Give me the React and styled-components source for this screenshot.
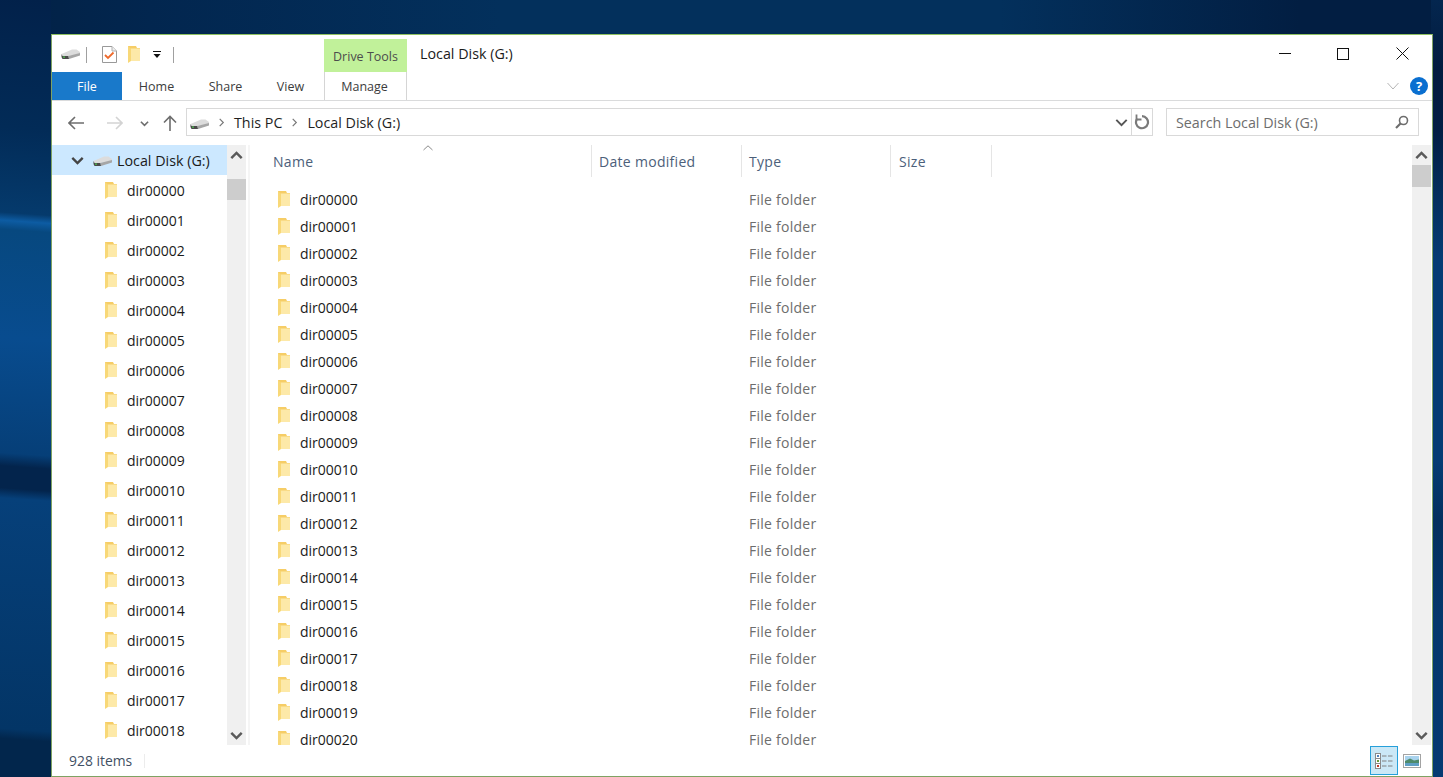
import React from "react";
import styled, { createGlobalStyle } from "styled-components";

const GlobalStyle = createGlobalStyle`
  html, body {
    margin: 0;
    height: 100%;
    overflow: hidden;
  }
  body {
    font-family: "Open Sans", "Noto Sans", "Liberation Sans", sans-serif;
    background-color: #02214a;
    background-image:
      linear-gradient(180deg, #04264f 0, #021c3f 70px, #021f44 130px, #04305f 200px, #053c74 260px, #053c74 460px, #03305f 520px, #05386d 620px, #053a72 777px),
      linear-gradient(184deg, #02214a 0, #022b57 130px, #053a6c 215px, #0d5ca3 223px, #07487f 232px, #084c8f 340px, #063f78 455px, #03244c 468px, #03244c 490px, #06407a 500px, #033566 730px, #02264c 740px, #02264c 777px),
      linear-gradient(90deg, #022145 0, #02264f 150px, #03305c 500px, #03305c 1000px, #021e42 1300px, #021e42 1443px);
    background-size: 12px 100%, 51px 100%, 100% 34px;
    background-position: right top, left top, left top;
    background-repeat: no-repeat;
  }
`;

const Desktop = styled.div`
  width: 1443px;
  height: 777px;
  padding: 34px 10px 0 51px;
  box-sizing: border-box;
`;

const Window = styled.div`
  height: 743px;
  box-sizing: border-box;
  background: #fff;
  border: 1px solid #7ea263;
  border-top-color: #8fc060;
  display: flex;
  flex-direction: column;
  color: #1a1a1a;
  font-size: 14px;
  overflow: hidden;
`;

const TitleBar = styled.div`
  height: 37px;
  flex: none;
  display: flex;
`;

const QuickAccess = styled.div`
  width: 272px;
  flex: none;
  display: flex;
  align-items: center;
  padding: 2px 0 0 9px;
  box-sizing: border-box;
`;

const QuickItem = styled.span`
  display: flex;
  margin-left: ${p => p.$gap || 0}px;
`;

const QuickDivider = styled.span`
  width: 1px;
  height: 16px;
  background: #a0a0a0;
  margin-left: ${p => p.$gap}px;
`;

const ContextTab = styled.div`
  width: 83px;
  height: 33px;
  margin-top: 4px;
  background: #c1f19a;
  color: #4d4d4d;
  font-size: 12.5px;
  display: flex;
  align-items: center;
  justify-content: center;
  padding-top: 2px;
  box-sizing: border-box;
`;

const Title = styled.div`
  flex: 1;
  font-size: 14.3px;
  padding: 9px 0 0 13px;
  color: #1a1a1a;
`;

const WindowButton = styled.button`
  width: ${p => p.$width}px;
  height: 37px;
  padding: 0;
  border: 0;
  background: none;
  display: flex;
  align-items: center;
  justify-content: center;
`;

const Ribbon = styled.div`
  height: 28px;
  flex: none;
  display: flex;
  border-bottom: 1px solid #dadbdc;
`;

const Tab = styled.div`
  width: ${p => p.$width}px;
  height: 28px;
  display: flex;
  align-items: center;
  justify-content: center;
  font-size: 12.5px;
  color: #3c3c3c;
`;

const FileTab = styled(Tab)`
  background: #1979ca;
  color: #fff;
`;

const ManageTab = styled(Tab)`
  border-left: 1px solid #d5d5d5;
  border-right: 1px solid #d5d5d5;
  box-sizing: border-box;
  margin-left: 3px;
  padding-right: 2px;
`;

const RibbonEnd = styled.div`
  margin-left: auto;
  display: flex;
  align-items: center;
  gap: 11px;
  padding: 0 4px 1px 0;
`;

const HelpBadge = styled.span`
  width: 18px;
  height: 18px;
  border-radius: 50%;
  background: #0a6fd0;
  color: #fff;
  font-size: 13px;
  font-weight: 700;
  line-height: 18px;
  text-align: center;
`;

const AddressRow = styled.div`
  height: 44px;
  flex: none;
  display: flex;
  align-items: flex-start;
  padding: 7px 12px 0 12px;
  box-sizing: border-box;
`;

const NavButtons = styled.div`
  width: 122px;
  height: 28px;
  flex: none;
  display: flex;
  align-items: center;
  padding-top: 2px;
  box-sizing: border-box;
`;

const NavButton = styled.span`
  display: flex;
  margin-left: ${p => p.$gap || 0}px;
`;

const AddressBox = styled.div`
  width: 967px;
  height: 28px;
  flex: none;
  box-sizing: border-box;
  border: 1px solid #d9d9d9;
  display: flex;
  align-items: center;
  font-size: 14.3px;
`;

const Crumb = styled.span`
  margin-left: ${p => p.$gap}px;
  margin-top: ${p => p.$drop || 0}px;
  display: flex;
  color: #1f1f1f;
`;

const AddressEnd = styled.div`
  margin-left: auto;
  height: 100%;
  display: flex;
  align-items: center;
`;

const RefreshCell = styled.span`
  width: 20px;
  height: 100%;
  margin-left: 3px;
  border-left: 1px solid #d9d9d9;
  display: flex;
  align-items: center;
  justify-content: center;
`;

const SearchBox = styled.div`
  width: 253px;
  height: 28px;
  flex: none;
  margin-left: 13px;
  box-sizing: border-box;
  border: 1px solid #d9d9d9;
  display: flex;
  align-items: center;
  justify-content: space-between;
  padding: 0 9px;
  color: #6d6d6d;
  font-size: 14.3px;
`;

const Body = styled.div`
  flex: 1;
  min-height: 0;
  display: flex;
  padding-right: 1px;
`;

const TreePane = styled.div`
  width: 175px;
  flex: none;
  overflow: hidden;
`;

const TreeRoot = styled.div`
  height: 30px;
  background: #cce8ff;
  display: flex;
  align-items: center;
  padding-left: 19px;
  font-size: 14.3px;
`;

const RootDrive = styled.span`
  display: flex;
  margin: 3px 5px 0 9px;
`;

const TreeRow = styled.div`
  height: 30px;
  display: flex;
  align-items: center;
  padding-left: 53px;
  font-size: 14px;
`;

const TreeLabel = styled.span`
  margin-left: 10px;
`;

const Scrollbar = styled.div`
  width: ${p => p.$width}px;
  flex: none;
  background: #f0f0f0;
  display: flex;
  flex-direction: column;
  align-items: center;
  position: relative;
`;

const ScrollArrow = styled.span`
  height: 20px;
  flex: none;
  display: flex;
  align-items: center;
  justify-content: center;
  margin-bottom: ${p => (p.$top ? "auto" : 0)};
`;

const Thumb = styled.span`
  position: absolute;
  left: 0;
  right: 0;
  top: ${p => p.$top}px;
  height: ${p => p.$height}px;
  background: #cdcdcd;
`;

const PaneGap = styled.div`
  width: 2px;
  margin-left: 2px;
  flex: none;
  background: #f5f5f5;
`;

const ListPane = styled.div`
  flex: 1;
  min-width: 0;
  overflow: hidden;
  position: relative;
`;

const HeaderRow = styled.div`
  height: 32px;
  display: flex;
  position: relative;
  padding-left: 17px;
  margin-bottom: 9px;
  color: #4c607a;
  font-size: 14px;
  letter-spacing: 0.3px;
`;

const HeaderCell = styled.div`
  width: ${p => p.$width}px;
  flex: none;
  box-sizing: border-box;
  padding-left: ${p => p.$pad}px;
  border-right: 1px solid #e5e5e5;
  display: flex;
  align-items: center;
`;

const SortCaret = styled.span`
  position: absolute;
  left: 173px;
  top: 0;
  display: flex;
`;

const FileRow = styled.div`
  height: 27px;
  display: flex;
  align-items: center;
  padding-left: 28px;
  font-size: 14px;
  line-height: 12px;
`;

const FileName = styled.span`
  width: 449px;
  margin-left: 10px;
  flex: none;
`;

const FileType = styled.span`
  color: #6d6d6d;
  letter-spacing: 0.25px;
`;

const StatusBar = styled.div`
  height: 31px;
  flex: none;
  display: flex;
  align-items: center;
  padding-left: 17px;
  color: #3f4f63;
  font-size: 13.9px;
`;

const StatusDivider = styled.span`
  width: 1px;
  height: 14px;
  background: #ececec;
  margin-left: 12px;
`;

const ViewButtons = styled.div`
  margin-left: auto;
  display: flex;
  align-items: center;
  padding-right: 6px;
`;

const ViewButton = styled.span`
  width: 28px;
  height: 29px;
  box-sizing: border-box;
  display: flex;
  align-items: center;
  justify-content: center;
  border: 1px solid ${p => (p.$active ? "#26a0da" : "transparent")};
  background: ${p => (p.$active ? "#cbe8f6" : "transparent")};
`;

const Drive = () => (
  <svg width="19" height="11" viewBox="0 0 19 11">
    <path d="M0.5 5 L11 0.5 H15.5 L19 3 V5 L7.5 7 H1.5 Z" fill="#dcdcdc" />
    <path d="M7.2 7 L19 4 V6.5 L8 10 Z" fill="#a6a6a6" />
    <path d="M0.5 5 L1.5 7 H7.2 L8 10 H1.5 L0.5 8 Z" fill="#4a4a4a" />
    <rect x="2" y="7.5" width="2" height="1.2" fill="#4fc24f" />
  </svg>
);

const Folder = () => (
  <svg width="12" height="17" viewBox="0 0 12 17">
    <path d="M0 0 H8 L9 2 H12 V15 H2 Z" fill="#f6cd66" />
    <path d="M3 2.5 H12 V15 H3 Z" fill="#fde9a8" />
    <path d="M0 0.3 L3 2.5 V15 L0 17 Z" fill="#f8d878" />
  </svg>
);

const Properties = () => (
  <svg width="15" height="17" viewBox="0 0 15 17">
    <path d="M0.5 0.5 H10 L14.5 5 V16.5 H0.5 Z" fill="#fff" stroke="#999" />
    <path d="M10 0.5 V5 H14.5" fill="#eee" stroke="#b0b0b0" />
    <path d="M3 9 L6 12 L11.5 6.5" fill="none" stroke="#ee6a2c" strokeWidth="1.8" />
  </svg>
);

const Chevron = ({ dir = "down", size = 10, color = "#6d6d6d", width = 1.8 }) => {
  const d = {
    down: "M1 3 L5 7 L9 3",
    up: "M1 7 L5 3 L9 7",
    right: "M3 1 L7 5 L3 9",
  }[dir];
  return (
    <svg width={size} height={size} viewBox="0 0 10 10">
      <path d={d} fill="none" stroke={color} strokeWidth={width} />
    </svg>
  );
};

const ArrowLeft = ({ color }) => (
  <svg width="16" height="14" viewBox="0 0 16 14">
    <path d="M16 7 H1.5 M7 1 L1 7 L7 13" fill="none" stroke={color} strokeWidth="1.6" />
  </svg>
);

const ArrowRight = ({ color }) => (
  <svg width="16" height="14" viewBox="0 0 16 14">
    <path d="M0 7 H14.5 M9 1 L15 7 L9 13" fill="none" stroke={color} strokeWidth="1.6" />
  </svg>
);

const ArrowUp = () => (
  <svg width="14" height="16" viewBox="0 0 14 16">
    <path d="M7 16 V1.5 M1 7.5 L7 1.5 L13 7.5" fill="none" stroke="#6d6d6d" strokeWidth="1.6" />
  </svg>
);

const Refresh = () => (
  <svg width="16" height="16" viewBox="0 0 16 16">
    <path d="M8 2.2 A6 6 0 1 1 3.2 4.6" fill="none" stroke="#7a7a7a" strokeWidth="2.2" />
    <path d="M2.5 0.5 V5.5 H7.5" fill="none" stroke="#7a7a7a" strokeWidth="1.8" />
  </svg>
);

const SearchGlass = () => (
  <svg width="14" height="14" viewBox="0 0 14 14">
    <circle cx="8.5" cy="5.5" r="4" fill="none" stroke="#6d6d6d" strokeWidth="1.6" />
    <path d="M5.5 8.5 L1 13" stroke="#6d6d6d" strokeWidth="2.2" />
  </svg>
);

const DetailsIcon = () => (
  <svg width="18" height="16" viewBox="0 0 18 16">
    <rect x="0.5" y="0.5" width="5" height="15" fill="#fff" stroke="#8a8a8a" />
    <path d="M0.5 5.5 H5.5 M0.5 10.5 H5.5" stroke="#8a8a8a" />
    <rect x="2" y="2" width="2" height="2" fill="#4f81bd" />
    <rect x="2" y="7" width="2" height="2" fill="#6a9a3a" />
    <rect x="2" y="12" width="2" height="2" fill="#c0392b" />
    <path d="M7 3 H11.5 M13 3 H17.5 M7 8 H11.5 M13 8 H17.5 M7 13 H11.5 M13 13 H17.5" stroke="#808080" />
  </svg>
);

const PreviewIcon = () => (
  <svg width="18" height="14" viewBox="0 0 18 14">
    <rect x="0.5" y="0.5" width="17" height="13" fill="#fff" stroke="#a3a3a3" />
    <rect x="2" y="2" width="14" height="5" fill="#a9d3ee" />
    <path d="M2 7 L7 4.5 L11 6.5 L16 5.5 V9 H2 Z" fill="#4e8a6a" />
    <rect x="2" y="9" width="14" height="3" fill="#5f9fc4" />
  </svg>
);

const names = count =>
  Array.from({ length: count }, (_, i) => "dir" + String(i).padStart(5, "0"));

export default function App() {
  return (
    <Desktop>
      <GlobalStyle />
      <Window>
        <TitleBar>
          <QuickAccess>
            <QuickItem><Drive /></QuickItem>
            <QuickDivider $gap={6} />
            <QuickItem $gap={15}><Properties /></QuickItem>
            <QuickItem $gap={11}><Folder /></QuickItem>
            <QuickItem $gap={13}>
              <svg width="8" height="7" viewBox="0 0 8 7">
                <path d="M0 0 H8 V1 H0 Z M0.5 3 H7.5 L4 7 Z" fill="#111" />
              </svg>
            </QuickItem>
            <QuickDivider $gap={12} />
          </QuickAccess>
          <ContextTab>Drive Tools</ContextTab>
          <Title>Local Disk (G:)</Title>
          <WindowButton $width={58} aria-label="Minimize">
            <svg width="12" height="12" viewBox="0 0 12 12"><path d="M0 5.5 H12" stroke="#111" /></svg>
          </WindowButton>
          <WindowButton $width={58} aria-label="Maximize">
            <svg width="12" height="12" viewBox="0 0 12 12"><rect x="0.5" y="0.5" width="11" height="11" fill="none" stroke="#111" /></svg>
          </WindowButton>
          <WindowButton $width={60} aria-label="Close">
            <svg width="13" height="13" viewBox="0 0 13 13"><path d="M0.5 0.5 L12.5 12.5 M12.5 0.5 L0.5 12.5" stroke="#111" /></svg>
          </WindowButton>
        </TitleBar>

        <Ribbon>
          <FileTab $width={70}>File</FileTab>
          <Tab $width={69}>Home</Tab>
          <Tab $width={69}>Share</Tab>
          <Tab $width={61}>View</Tab>
          <ManageTab $width={83}>Manage</ManageTab>
          <RibbonEnd>
            <svg width="12" height="8" viewBox="0 0 12 8">
              <path d="M0.5 1 L6 7 L11.5 1" fill="none" stroke="#b5b5b5" />
            </svg>
            <HelpBadge>?</HelpBadge>
          </RibbonEnd>
        </Ribbon>

        <AddressRow>
          <NavButtons>
            <NavButton $gap={4}><ArrowLeft color="#6d6d6d" /></NavButton>
            <NavButton $gap={23}><ArrowRight color="#d3d3d3" /></NavButton>
            <NavButton $gap={17}><Chevron size={9} /></NavButton>
            <NavButton $gap={14}><ArrowUp /></NavButton>
          </NavButtons>
          <AddressBox>
            <Crumb $gap={3} $drop={5}><Drive /></Crumb>
            <Crumb $gap={8}><Chevron dir="right" size={9} color="#777" width={1.3} /></Crumb>
            <Crumb $gap={8}>This PC</Crumb>
            <Crumb $gap={8}><Chevron dir="right" size={9} color="#777" width={1.3} /></Crumb>
            <Crumb $gap={8}>Local Disk (G:)</Crumb>
            <AddressEnd>
              <Chevron size={13} color="#555" width={1.5} />
              <RefreshCell><Refresh /></RefreshCell>
            </AddressEnd>
          </AddressBox>
          <SearchBox>
            <span>Search Local Disk (G:)</span>
            <SearchGlass />
          </SearchBox>
        </AddressRow>

        <Body>
          <TreePane>
            <TreeRoot>
              <Chevron size={13} color="#444" />
              <RootDrive><Drive /></RootDrive>
              Local Disk (G:)
            </TreeRoot>
            {names(19).map(name => (
              <TreeRow key={name}>
                <Folder />
                <TreeLabel>{name}</TreeLabel>
              </TreeRow>
            ))}
          </TreePane>
          <Scrollbar $width={19}>
            <ScrollArrow $top><Chevron dir="up" size={13} color="#5a5a5a" width={1.9} /></ScrollArrow>
            <Thumb $top={34} $height={21} />
            <ScrollArrow><Chevron size={13} color="#5a5a5a" width={1.9} /></ScrollArrow>
          </Scrollbar>
          <PaneGap />
          <ListPane>
            <HeaderRow>
              <HeaderCell $width={325} $pad={6}>Name</HeaderCell>
              <SortCaret>
                <svg width="10" height="6" viewBox="0 0 10 6">
                  <path d="M0.5 5 L5 0.8 L9.5 5" fill="none" stroke="#8a8a8a" />
                </svg>
              </SortCaret>
              <HeaderCell $width={150} $pad={7}>Date modified</HeaderCell>
              <HeaderCell $width={149} $pad={7}>Type</HeaderCell>
              <HeaderCell $width={101} $pad={8}>Size</HeaderCell>
            </HeaderRow>
            {names(21).map(name => (
              <FileRow key={name}>
                <Folder />
                <FileName>{name}</FileName>
                <FileType>File folder</FileType>
              </FileRow>
            ))}
          </ListPane>
          <Scrollbar $width={19}>
            <ScrollArrow $top><Chevron dir="up" size={13} color="#5a5a5a" width={1.9} /></ScrollArrow>
            <Thumb $top={20} $height={22} />
            <ScrollArrow><Chevron size={13} color="#5a5a5a" width={1.9} /></ScrollArrow>
          </Scrollbar>
        </Body>

        <StatusBar>
          928 items
          <StatusDivider />
          <ViewButtons>
            <ViewButton $active><DetailsIcon /></ViewButton>
            <ViewButton><PreviewIcon /></ViewButton>
          </ViewButtons>
        </StatusBar>
      </Window>
    </Desktop>
  );
}
